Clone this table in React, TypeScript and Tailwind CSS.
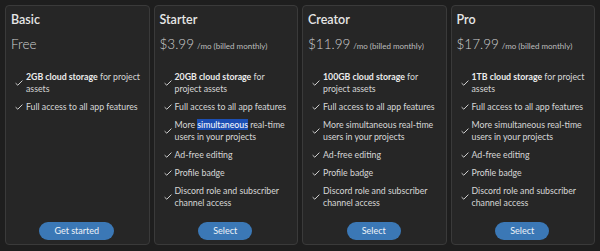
import React from "react";

type Feature = { bold?: string; text: React.ReactNode };
type Plan = { name: string; price: string; per?: boolean; button: string; features: Feature[] };

const extra: Feature[] = [
  { text: "Full access to all app features" },
  { text: "More simultaneous real-time users in your projects" },
  { text: "Ad-free editing" },
  { text: "Profile badge" },
  { text: "Discord role and subscriber channel access" },
];

const plans: Plan[] = [
  {
    name: "Basic",
    price: "Free",
    button: "Get started",
    features: [{ bold: "2GB cloud storage", text: " for project assets" }, { text: "Full access to all app features" }],
  },
  {
    name: "Starter",
    price: "$3.99",
    per: true,
    button: "Select",
    features: [
      { bold: "20GB cloud storage", text: " for project assets" },
      extra[0],
      {
        text: (
          <>
            More <span className="bg-[#1c4fb4] text-white">simultaneous</span> real-time users in your projects
          </>
        ),
      },
      ...extra.slice(2),
    ],
  },
  {
    name: "Creator",
    price: "$11.99",
    per: true,
    button: "Select",
    features: [{ bold: "100GB cloud storage", text: " for project assets" }, ...extra],
  },
  {
    name: "Pro",
    price: "$17.99",
    per: true,
    button: "Select",
    features: [{ bold: "1TB cloud storage", text: " for project assets" }, ...extra],
  },
];

function Check() {
  return (
    <svg width="8" height="6" viewBox="0 0 8 6" className="shrink-0">
      <path d="M0.6 3.2 L2.8 5.2 L7.4 0.6" fill="none" stroke="#cfcfcf" strokeWidth="1" />
    </svg>
  );
}

export default function App() {
  return (
    <div
      className="w-[600px] h-[251px] overflow-hidden bg-[#1e1e1e] px-[5px] pt-[5px] pb-[6px] grid grid-cols-4 gap-[4px] text-[#d6d6d6]"
      style={{ fontFamily: 'Lato, "Noto Sans", sans-serif' }}
    >
      {plans.map(p => (
        <div key={p.name} className="min-h-0 flex flex-col border border-[#3a3a3a] rounded-[4px] bg-[#262626] pl-[5px] pr-[6px] pt-[6px] pb-[4px]">
          <div className="text-[12.5px] leading-[16px] font-semibold text-[#e6e6e6]">{p.name}</div>
          <div className="mt-[7px] h-[18px] flex items-baseline gap-[3px] whitespace-nowrap">
            <span className="text-[13.5px] leading-[18px] font-light text-[#d0d0d0]">{p.price}</span>
            {p.per && <span className="text-[8px] text-[#bdbdbd]">/mo (billed monthly)</span>}
          </div>
          <ul className="mt-[18px] pl-[4px] flex flex-col gap-[6px]">
            {p.features.map((f, i) => (
              <li key={i} className="flex items-center gap-[3px] text-[8.75px] leading-[12px]">
                <Check />
                <span>
                  {f.bold && <b className="font-bold text-[#ececec]">{f.bold}</b>}
                  {f.text}
                </span>
              </li>
            ))}
          </ul>
          <div className="mt-auto flex justify-center">
            <button
              type="button"
              className="h-[18px] px-[15px] rounded-full bg-[#3b78b6] text-[9px] leading-[18px] text-[#eef3f8]"
            >
              {p.button}
            </button>
          </div>
        </div>
      ))}
    </div>
  );
}
